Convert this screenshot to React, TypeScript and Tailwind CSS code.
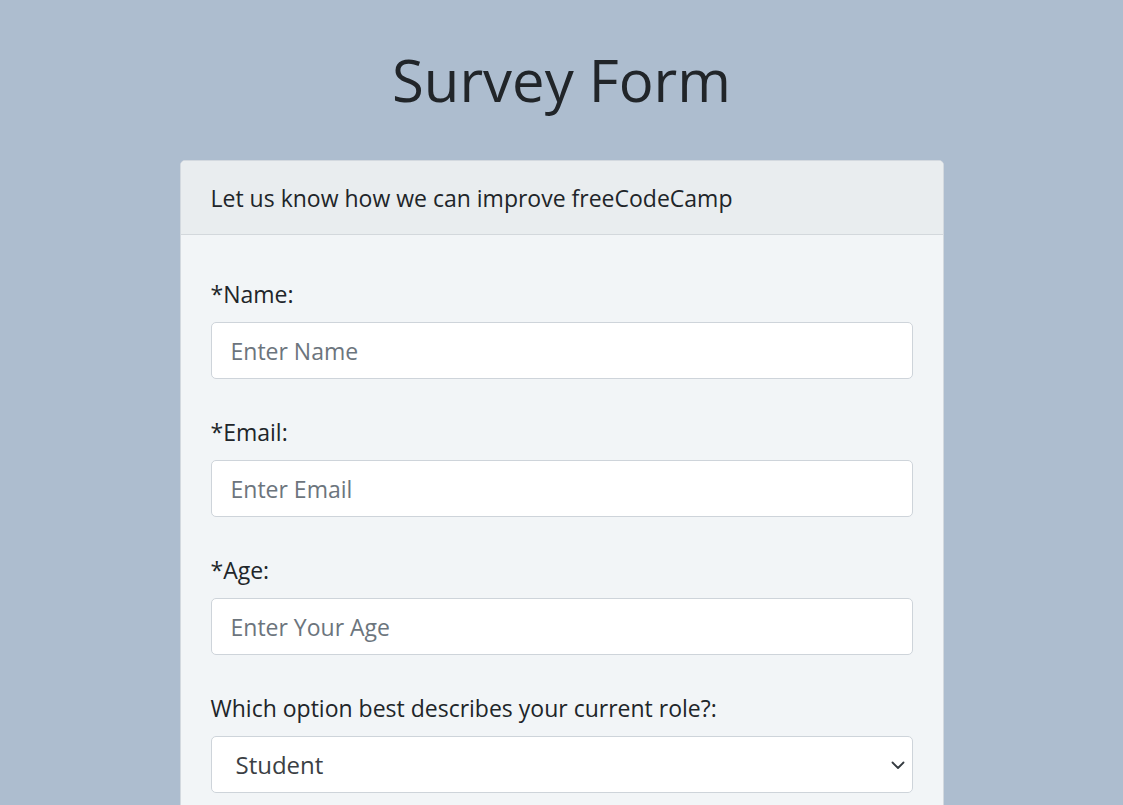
const fields = [
  { label: "*Name:", placeholder: "Enter Name", type: "text" },
  { label: "*Email:", placeholder: "Enter Email", type: "email" },
  { label: "*Age:", placeholder: "Enter Your Age", type: "number" },
];

export default function App() {
  return (
    <div className="min-h-screen bg-[#adbdcf] pt-[40px] text-[#212529] [font-family:'Open_Sans',sans-serif]">
      <h1 className="text-center text-[58px] leading-[80px] font-normal text-[#212529]">Survey Form</h1>

      <div className="mx-auto mt-[40px] w-[764px] overflow-hidden rounded-[5px] border border-[#d3d9df] bg-[#f2f5f7]">
        <div className="flex h-[74px] items-center border-b border-[#d3d8dc] bg-[#e9edef] px-[30px]">
          <p className="text-[23px] leading-[34px] text-[#212529]">Let us know how we can improve freeCodeCamp</p>
        </div>

        <form className="flex flex-col gap-[36px] px-[30px] pt-[42px] pb-8">
          {fields.map((field) => (
            <div key={field.label} className="flex flex-col gap-[11px]">
              <label className="text-[23px] leading-[34px]">{field.label}</label>
              <input
                type={field.type}
                placeholder={field.placeholder}
                className="h-[57px] w-full rounded-[5px] border border-[#ced4da] bg-white px-[19px] text-[23px] text-[#495057] placeholder:text-[#6c757d] outline-none"
              />
            </div>
          ))}

          <div className="flex flex-col gap-[11px]">
            <label className="text-[23px] leading-[34px]">Which option best describes your current role?:</label>
            <div className="relative">
              <select className="h-[57px] w-full appearance-none rounded-[5px] border border-[#ced4da] bg-white px-[24px] text-[24px] text-[#3b3f44] outline-none">
                <option>Student</option>
                <option>Full Time Job</option>
                <option>Full Time Learner</option>
                <option>Prefer not to say</option>
                <option>Other</option>
              </select>
              <svg
                className="pointer-events-none absolute top-1/2 right-[7px] h-[16px] w-[16px] -translate-y-1/2"
                viewBox="0 0 16 16"
                fill="none"
                stroke="#343a40"
                strokeWidth="1.8"
                strokeLinecap="round"
                strokeLinejoin="round"
              >
                <path d="m2.5 5.5 5.5 5.5 5.5-5.5" />
              </svg>
            </div>
          </div>
        </form>
      </div>
    </div>
  );
}
